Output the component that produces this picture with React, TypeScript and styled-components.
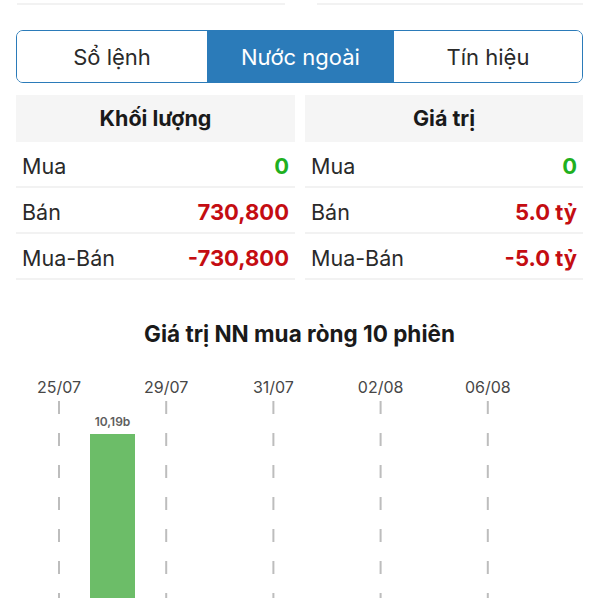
import React from "react";
import styled, { createGlobalStyle } from "styled-components";

const GlobalStyle = createGlobalStyle`
  html, body { margin: 0; padding: 0; background: #ffffff; }
  body { font-family: "Inter", "Liberation Sans", sans-serif; color: #1c1c1c; overflow: hidden; }
  * { box-sizing: border-box; }
`;

const Page = styled.div`
  width: 600px;
  height: 600px;
  overflow: hidden;
  background: #fff;
`;

const Content = styled.div`
  padding: 0 17px 0 16px;
`;

const StubRow = styled.div`
  display: grid;
  grid-template-columns: 268px 266px;
  column-gap: 32px;
  padding-left: 1px;
`;

const StubCell = styled.div`
  height: 5px;
  border-bottom: 2px solid #f2f2f2;
`;

const Segment = styled.div`
  margin-top: 25px;
  height: 53px;
  display: grid;
  grid-template-columns: 190px 187px 1fr;
  border: 1.5px solid #2b7bb9;
  border-radius: 7px;
  overflow: hidden;
`;

const Tab = styled.div<{ $active?: boolean }>`
  display: flex;
  align-items: center;
  justify-content: center;
  font-size: 22px;
  color: ${(p) => (p.$active ? "#ffffff" : "#2a2a2a")};
  background: ${(p) => (p.$active ? "#2b7bb9" : "#ffffff")};
`;

const Tables = styled.div`
  margin-top: 12px;
  display: grid;
  grid-template-columns: 279px 1fr;
  column-gap: 10px;
`;

const Table = styled.div`
  display: flex;
  flex-direction: column;
`;

const Header = styled.div`
  height: 47px;
  background: #f5f5f5;
  display: flex;
  align-items: center;
  justify-content: center;
  font-size: 21.5px;
  font-weight: 700;
  color: #1a1a1a;
  padding-bottom: 2px;
`;

const Row = styled.div`
  height: 46px;
  border-bottom: 2px solid #f2f2f2;
  display: flex;
  align-items: center;
  justify-content: space-between;
  padding: 4px 6px 0 6px;
`;

const Label = styled.span`
  font-size: 21.5px;
  color: #2a2a2a;
`;

const Value = styled.span<{ $tone: "up" | "down" }>`
  font-size: 22px;
  font-weight: 700;
  color: ${(p) => (p.$tone === "up" ? "#1fb01f" : "#c40d12")};
`;

const ChartTitle = styled.div`
  margin-top: 40px;
  text-align: center;
  font-size: 22.5px;
  font-weight: 700;
  line-height: 27px;
  color: #1a1a1a;
`;

const ChartArea = styled.div`
  margin-top: 21px;
  height: 230px;
`;

type Item = { label: string; value: string; tone: "up" | "down" };

const volume: Item[] = [
  { label: "Mua", value: "0", tone: "up" },
  { label: "Bán", value: "730,800", tone: "down" },
  { label: "Mua-Bán", value: "-730,800", tone: "down" },
];

const worth: Item[] = [
  { label: "Mua", value: "0", tone: "up" },
  { label: "Bán", value: "5.0 tỷ", tone: "down" },
  { label: "Mua-Bán", value: "-5.0 tỷ", tone: "down" },
];

const dates = ["25/07", "29/07", "31/07", "02/08", "06/08"];

function StatTable({ title, items }: { title: string; items: Item[] }) {
  return (
    <Table>
      <Header>{title}</Header>
      {items.map((it) => (
        <Row key={it.label}>
          <Label>{it.label}</Label>
          <Value $tone={it.tone}>{it.value}</Value>
        </Row>
      ))}
    </Table>
  );
}

function Chart() {
  const step = 107.2;
  const x0 = 59;
  return (
    <svg width="600" height="230" viewBox="0 0 600 230">
      {dates.map((d, i) => {
        const x = x0 + i * step;
        return (
          <g key={d}>
            <text
              x={x}
              y={25}
              textAnchor="middle"
              fontFamily="Inter, 'Liberation Sans', sans-serif"
              fontSize="16"
              fill="#474747"
            >
              {d}
            </text>
            <line
              x1={x}
              y1={33}
              x2={x}
              y2={230}
              stroke="#bdbdbd"
              strokeWidth="2"
              strokeDasharray="13 19"
            />
          </g>
        );
      })}
      <rect x={90} y={66} width={45} height={170} fill="#6cbd68" />
      <text
        x={112.5}
        y={58}
        textAnchor="middle"
        fontFamily="Inter, 'Liberation Sans', sans-serif"
        fontSize="12"
        fontWeight="600"
        fill="#5e5e5e"
      >
        10,19b
      </text>
    </svg>
  );
}

export default function App() {
  return (
    <Page>
      <GlobalStyle />
      <Content>
        <StubRow>
          <StubCell />
          <StubCell />
        </StubRow>
        <Segment>
          <Tab>Sổ lệnh</Tab>
          <Tab $active>Nước ngoài</Tab>
          <Tab>Tín hiệu</Tab>
        </Segment>
        <Tables>
          <StatTable title="Khối lượng" items={volume} />
          <StatTable title="Giá trị" items={worth} />
        </Tables>
        <ChartTitle>Giá trị NN mua ròng 10 phiên</ChartTitle>
      </Content>
      <ChartArea>
        <Chart />
      </ChartArea>
    </Page>
  );
}
